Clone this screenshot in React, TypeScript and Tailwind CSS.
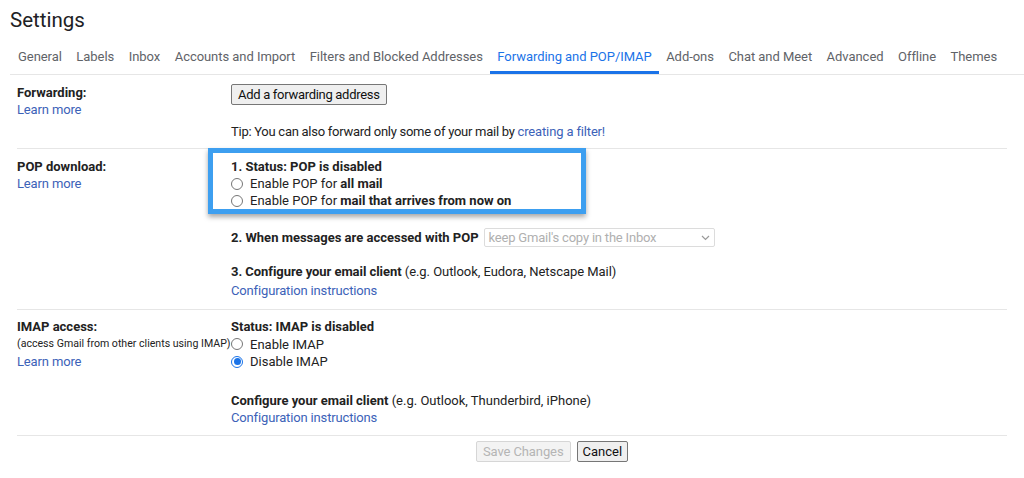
import React from "react";

const tabs = [
  "General",
  "Labels",
  "Inbox",
  "Accounts and Import",
  "Filters and Blocked Addresses",
  "Forwarding and POP/IMAP",
  "Add-ons",
  "Chat and Meet",
  "Advanced",
  "Offline",
  "Themes",
];

function Radio({ checked = false }: { checked?: boolean }) {
  return (
    <span
      className={
        "inline-flex items-center justify-center w-[12px] h-[12px] rounded-full border shrink-0 mr-[7px] " +
        (checked ? "border-[#1a73e8] bg-white" : "border-[#767676] bg-white")
      }
    >
      {checked && <span className="w-[7px] h-[7px] rounded-full bg-[#1a73e8]" />}
    </span>
  );
}

function Link({ children }: { children: React.ReactNode }) {
  return <span className="text-[#3c62b8] tracking-[-0.15px]">{children}</span>;
}

export default function App() {
  return (
    <div
      className="w-[1024px] h-[478px] bg-white overflow-hidden text-[#222] text-[13px] leading-[17px]"
      style={{ fontFamily: "Roboto, 'Liberation Sans', sans-serif" }}
    >
      <div className="pl-[10px] pt-[8px] text-[20.5px] leading-[24px] text-[#202124]">Settings</div>

      <div className="ml-[10px] mt-[10px] flex pl-[1px] gap-[0.5px] border-b border-[#e6e6e6]">
        {tabs.map((t) => {
          const active = t === "Forwarding and POP/IMAP";
          return (
            <div
              key={t}
              className={
                "px-[7px] h-[32px] flex items-center text-[13px] tracking-[-0.05px] border-b-[3px] " +
                (active ? "text-[#1a73e8] border-[#1a73e8]" : "text-[#5f6368] border-transparent")
              }
            >
              {t}
            </div>
          );
        })}
      </div>

      <div className="mx-[17px]">
        {/* Forwarding */}
        <div className="flex pt-[9px] pb-[8px] border-b border-[#e6e6e6]">
          <div className="w-[214px] shrink-0">
            <div className="font-bold">Forwarding:</div>
            <Link>Learn more</Link>
          </div>
          <div className="flex flex-col items-start">
            <button className="h-[21px] px-[6px] border border-[#767676] rounded-[2px] bg-[#efefef] text-[13px] leading-[19px] tracking-[-0.3px] text-[#111]">
              Add a forwarding address
            </button>
            <div className="mt-[18px] tracking-[-0.27px]">
              Tip: You can also forward only some of your mail by <Link>creating a filter!</Link>
            </div>
          </div>
        </div>

        {/* POP */}
        <div className="flex pt-[9px] pb-[10px] border-b border-[#e6e6e6]">
          <div className="w-[214px] shrink-0">
            <div className="font-bold">POP download:</div>
            <Link>Learn more</Link>
          </div>
          <div className="flex flex-col items-start">
            <div className="relative">
              <div className="font-bold">1. Status: POP is disabled</div>
              <div className="flex items-center">
                <Radio />
                <span>
                  Enable POP for <b>all mail</b>
                </span>
              </div>
              <div className="flex items-center">
                <Radio />
                <span>
                  Enable POP for <b>mail that arrives from now on</b>
                </span>
              </div>
              <div className="absolute left-[-23px] top-[-10px] w-[378px] h-[66px] border-[5px] border-[#3d9ff0] shadow-[0_3px_5px_rgba(0,0,0,0.35)]" />
            </div>
            <div className="flex items-center mt-[19px]">
              <span className="font-bold mr-[5px]">2. When messages are accessed with POP</span>
              <div className="w-[231px] h-[19px] border border-[#dcdcdc] rounded-[2px] flex items-center justify-between px-[4px] text-[#b0b0b0] text-[13px] tracking-[-0.2px]">
                <span>keep Gmail's copy in the Inbox</span>
                <svg width="9" height="6" viewBox="0 0 9 6" fill="none">
                  <path d="M1 1l3.5 3.5L8 1" stroke="#9a9a9a" strokeWidth="1.2" />
                </svg>
              </div>
            </div>
            <div className="mt-[16px] tracking-[-0.05px]">
              <b>3. Configure your email client</b> (e.g. Outlook, Eudora, Netscape Mail)
            </div>
            <div className="mt-[2px]">
              <Link>Configuration instructions</Link>
            </div>
          </div>
        </div>

        {/* IMAP */}
        <div className="flex pt-[8px] pb-[9px] border-b border-[#e6e6e6]">
          <div className="w-[214px] shrink-0">
            <div className="font-bold">IMAP access:</div>
            <div className="text-[10.6px] leading-[18px] whitespace-nowrap">(access Gmail from other clients using IMAP)</div>
            <Link>Learn more</Link>
          </div>
          <div className="flex flex-col items-start">
            <div className="font-bold">Status: IMAP is disabled</div>
            <div className="flex items-center h-[18px]">
              <Radio />
              <span>Enable IMAP</span>
            </div>
            <div className="flex items-center h-[17px]">
              <Radio checked />
              <span>Disable IMAP</span>
            </div>
            <div className="mt-[22px]">
              <b>Configure your email client</b> (e.g. Outlook, Thunderbird, iPhone)
            </div>
            <Link>Configuration instructions</Link>
          </div>
        </div>

        <div className="flex justify-center gap-[6px] pt-[5px] pl-[80px]">
          <button className="h-[21px] px-[6px] border border-[#d6d6d6] rounded-[2px] bg-[#f3f3f3] text-[#b5b5b5] text-[13px] leading-[19px] tracking-[-0.1px]">
            Save Changes
          </button>
          <button className="h-[21px] px-[5px] border border-[#767676] rounded-[2px] bg-[#efefef] text-[#111] text-[13px] leading-[19px]">
            Cancel
          </button>
        </div>
      </div>
    </div>
  );
}
